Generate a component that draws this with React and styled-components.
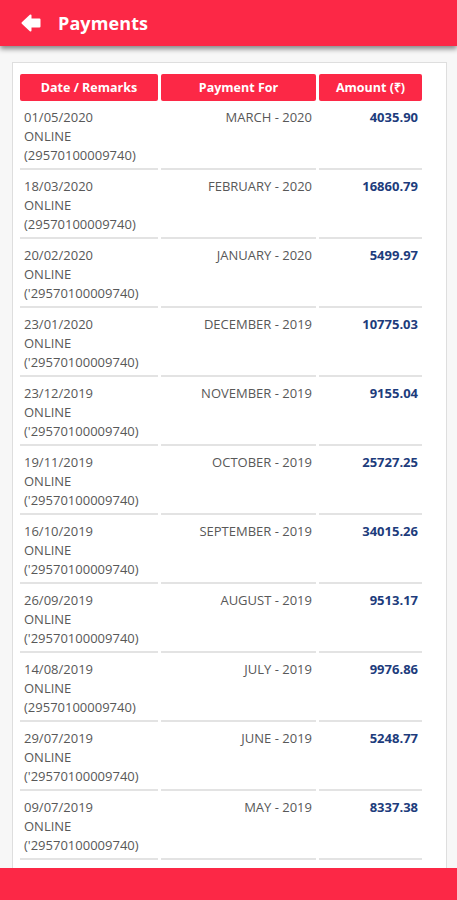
import React from 'react';
import styled, {createGlobalStyle} from 'styled-components';

const GlobalStyle = createGlobalStyle`
    html, body {
        margin: 0;
        padding: 0;
        background: #f7f7f7;
        font-family: "Open Sans", "Liberation Sans", sans-serif;
    }
`;

const RED = '#fc2846';

const Page = styled.div`
    min-height: 900px;
    padding-bottom: 40px;
`;
const TopBar = styled.header`
    height: 46px;
    background-color: ${RED};
    display: flex;
    align-items: center;
    gap: 17px;
    padding-left: 21px;
    box-shadow: 0 3px 5px rgba(0, 0, 0, 0.45);
    position: relative;
    z-index: 2;
`;
const Title = styled.h1`
    margin: 0;
    color: #fff;
    font-size: 18px;
    font-weight: 700;
    letter-spacing: 0.1px;
`;
const Card = styled.section`
    margin: 16px 10px 0 12px;
    background: #fff;
    border: 1px solid #dedede;
    padding: 8px 4px 14px 4px;
`;
const Table = styled.table`
    border-collapse: separate;
    border-spacing: 3px;
    table-layout: fixed;
    width: 408px;
`;
const HeadCell = styled.th`
    background-color: ${RED};
    color: #fff;
    height: 27px;
    padding: 0;
    border-radius: 2px;
    font-size: 12.5px;
    font-weight: 700;
    text-align: center;
`;
const Cell = styled.td`
    vertical-align: top;
    padding: 4px 4px 3px 4px;
    border-bottom: 2px solid #e3e3e3;
    font-size: 13px;
    line-height: 19px;
    color: #585858;
    text-align: ${(p) => p.align || 'left'};
`;
const Amount = styled.span`
    color: #1d3c7c;
    font-weight: 700;
`;
const BottomBar = styled.footer`
    position: fixed;
    left: 0;
    right: 0;
    bottom: 0;
    height: 32px;
    background-color: ${RED};
    z-index: 3;
`;

const BackArrow = () => (
    <svg width="20" height="18" viewBox="0 0 20 18">
        <path
            d="M1.5 9 L9.5 1.5 L9.5 5.5 L18.5 5.5 L18.5 12.5 L9.5 12.5 L9.5 16.5 Z"
            fill="#fff"
            stroke="#fff"
            strokeWidth="2"
            strokeLinejoin="round"
        />
    </svg>
);

const payments = [
    {date: '01/05/2020', ref: '(29570100009740)', month: 'MARCH - 2020', amount: '4035.90'},
    {date: '18/03/2020', ref: '(29570100009740)', month: 'FEBRUARY - 2020', amount: '16860.79'},
    {date: '20/02/2020', ref: "('29570100009740)", month: 'JANUARY - 2020', amount: '5499.97'},
    {date: '23/01/2020', ref: "('29570100009740)", month: 'DECEMBER - 2019', amount: '10775.03'},
    {date: '23/12/2019', ref: "('29570100009740)", month: 'NOVEMBER - 2019', amount: '9155.04'},
    {date: '19/11/2019', ref: "('29570100009740)", month: 'OCTOBER - 2019', amount: '25727.25'},
    {date: '16/10/2019', ref: "('29570100009740)", month: 'SEPTEMBER - 2019', amount: '34015.26'},
    {date: '26/09/2019', ref: "('29570100009740)", month: 'AUGUST - 2019', amount: '9513.17'},
    {date: '14/08/2019', ref: '(29570100009740)', month: 'JULY - 2019', amount: '9976.86'},
    {date: '29/07/2019', ref: "('29570100009740)", month: 'JUNE - 2019', amount: '5248.77'},
    {date: '09/07/2019', ref: "('29570100009740)", month: 'MAY - 2019', amount: '8337.38'},
];

export default function App() {
    return (
        <Page>
            <GlobalStyle />
            <TopBar>
                <BackArrow />
                <Title>Payments</Title>
            </TopBar>
            <Card>
                <Table>
                    <colgroup>
                        <col style={{width: 138}} />
                        <col style={{width: 155}} />
                        <col style={{width: 103}} />
                    </colgroup>
                    <thead>
                        <tr>
                            <HeadCell>Date / Remarks</HeadCell>
                            <HeadCell>Payment For</HeadCell>
                            <HeadCell>Amount (₹)</HeadCell>
                        </tr>
                    </thead>
                    <tbody>
                        {payments.map((p) => (
                            <tr key={p.date}>
                                <Cell>
                                    {p.date}
                                    <br />
                                    ONLINE
                                    <br />
                                    {p.ref}
                                </Cell>
                                <Cell align="right">{p.month}</Cell>
                                <Cell align="right">
                                    <Amount>{p.amount}</Amount>
                                </Cell>
                            </tr>
                        ))}
                    </tbody>
                </Table>
            </Card>
            <BottomBar />
        </Page>
    );
}
